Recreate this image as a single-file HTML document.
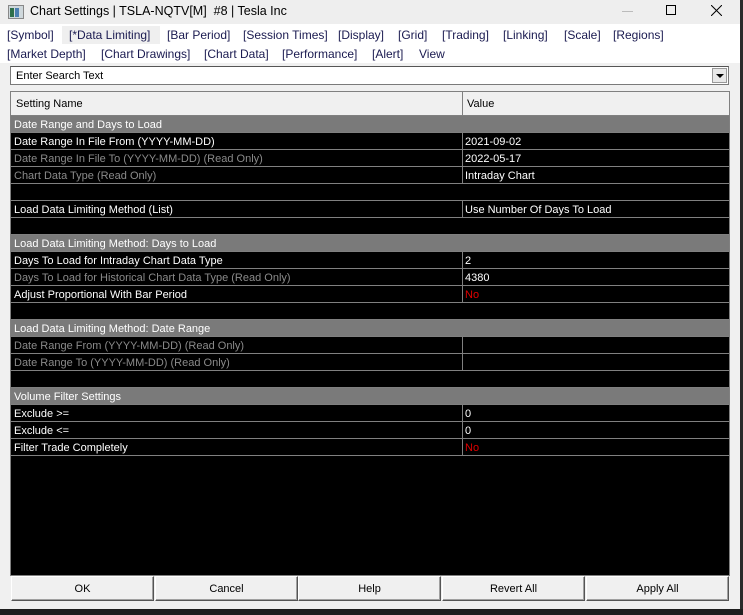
<!DOCTYPE html>
<html><head><style>
*{margin:0;padding:0;box-sizing:border-box}
body{width:743px;height:615px;background:#f0f0f0;font-family:"Liberation Sans",sans-serif;font-size:11px;position:relative;overflow:hidden}
.tb{position:absolute;left:0;top:0;width:741px;height:24px;background:#eeeeee;font-size:12.5px;color:#000}
.menu{position:absolute;left:0;top:24px;width:741px;height:39px;background:#fff;font-size:12px;color:#1a1a50}
.menu div{position:absolute;white-space:nowrap}
.search{position:absolute;left:10px;top:66px;width:719px;height:19px;background:#fff;border:1px solid #7a7a7a;border-top-color:#555;padding:3px 5px 0;font-size:11px}
.dd{position:absolute;right:1px;top:1px;width:15px;height:15px;background:#e8e8e8;border:1px solid #999}
.dd:after{content:"";position:absolute;left:3px;top:5px;border-left:4px solid transparent;border-right:4px solid transparent;border-top:4px solid #000}
.tbl{position:absolute;left:10px;top:91px;width:720px;height:485px;background:#000;border:1px solid #808080}
.hdr{position:absolute;left:0;top:0;width:718px;height:24px;background:#f0f0f0;border-bottom:1px solid #808080}
.hdr span{position:absolute;top:6px}
.r{position:absolute;left:0;width:718px;height:17px;border-bottom:1px solid #808080;color:#fff;white-space:nowrap}
.r span{position:absolute;top:3px}
.r .v{left:451px;border-left:1px solid #808080;height:16px;top:0;padding:3px 0 0 2px}
.s{background:#7a7a7a}
.g{color:#8a8a8a}
.red{color:#e00000}
.btns{position:absolute;left:10px;top:576px;width:720px;height:25px}
.b{position:absolute;top:0;height:25px;width:143px;background:#f0f0f0;border:1px solid #fff;border-right-color:#555;border-bottom-color:#555;box-shadow:inset -1px -1px 0 #a0a0a0;text-align:center;line-height:24px;font-size:11px}
</style></head><body>
<div class="tb">
<svg style="position:absolute;left:8px;top:5px" width="16" height="14"><rect x="0.5" y="0.5" width="15" height="13" fill="#cfd8dc" stroke="#888"/><rect x="2" y="3" width="4" height="9" fill="#2e6f4a"/><rect x="7" y="3" width="4" height="9" fill="#4a7fb0"/></svg>
<div style="position:absolute;left:30px;top:4px">Chart Settings | TSLA-NQTV[M]&nbsp; #8 | Tesla Inc</div>
<div style="position:absolute;left:622px;top:11px;width:11px;height:1px;background:#bbb"></div>
<div style="position:absolute;left:666px;top:5px;width:10px;height:10px;border:1px solid #000"></div>
<svg style="position:absolute;left:711px;top:5px" width="11" height="11"><path d="M0 0L11 11M11 0L0 11" stroke="#000" stroke-width="1"/></svg>
</div>
<div class="menu">
<div style="left:62px;top:2px;width:98px;height:18px;background:#efefef"></div>
<div style="left:7px;top:4px">[Symbol]</div><div style="left:69px;top:4px">[*Data Limiting]</div><div style="left:167px;top:4px">[Bar Period]</div><div style="left:243px;top:4px">[Session Times]</div><div style="left:338px;top:4px">[Display]</div><div style="left:398px;top:4px">[Grid]</div><div style="left:442px;top:4px">[Trading]</div><div style="left:503px;top:4px">[Linking]</div><div style="left:564px;top:4px">[Scale]</div><div style="left:613px;top:4px">[Regions]</div>
<div style="left:7px;top:23px">[Market Depth]</div><div style="left:101px;top:23px">[Chart Drawings]</div><div style="left:204px;top:23px">[Chart Data]</div><div style="left:282px;top:23px">[Performance]</div><div style="left:372px;top:23px">[Alert]</div><div style="left:419px;top:23px">View</div>
</div>
<div class="search">Enter Search Text<div class="dd"></div></div>
<div class="tbl">
<div class="hdr"><span style="left:5px">Setting Name</span><span style="left:451px;top:0;height:24px;border-left:1px solid #808080;padding:6px 0 0 4px">Value</span></div>
<div class="r s" style="top:24px"><span style="left:3px">Date Range and Days to Load</span></div>
<div class="r" style="top:41px"><span style="left:3px">Date Range In File From (YYYY-MM-DD)</span><span class="v">2021-09-02</span></div>
<div class="r" style="top:58px"><span class="g" style="left:3px">Date Range In File To (YYYY-MM-DD) (Read Only)</span><span class="v">2022-05-17</span></div>
<div class="r" style="top:75px"><span class="g" style="left:3px">Chart Data Type (Read Only)</span><span class="v">Intraday Chart</span></div>
<div class="r" style="top:92px"></div>
<div class="r" style="top:109px"><span style="left:3px">Load Data Limiting Method (List)</span><span class="v">Use Number Of Days To Load</span></div>
<div class="r" style="top:126px"></div>
<div class="r s" style="top:143px"><span style="left:3px">Load Data Limiting Method: Days to Load</span></div>
<div class="r" style="top:160px"><span style="left:3px">Days To Load for Intraday Chart Data Type</span><span class="v">2</span></div>
<div class="r" style="top:177px"><span class="g" style="left:3px">Days To Load for Historical Chart Data Type (Read Only)</span><span class="v">4380</span></div>
<div class="r" style="top:194px"><span style="left:3px">Adjust Proportional With Bar Period</span><span class="v red">No</span></div>
<div class="r" style="top:211px"></div>
<div class="r s" style="top:228px"><span style="left:3px">Load Data Limiting Method: Date Range</span></div>
<div class="r" style="top:245px"><span class="g" style="left:3px">Date Range From (YYYY-MM-DD) (Read Only)</span><span class="v"></span></div>
<div class="r" style="top:262px"><span class="g" style="left:3px">Date Range To (YYYY-MM-DD) (Read Only)</span><span class="v"></span></div>
<div class="r" style="top:279px"></div>
<div class="r s" style="top:296px"><span style="left:3px">Volume Filter Settings</span></div>
<div class="r" style="top:313px"><span style="left:3px">Exclude &gt;=</span><span class="v">0</span></div>
<div class="r" style="top:330px"><span style="left:3px">Exclude &lt;=</span><span class="v">0</span></div>
<div class="r" style="top:347px"><span style="left:3px">Filter Trade Completely</span><span class="v red">No</span></div>
</div>
<div class="btns">
<div class="b" style="left:1px">OK</div><div class="b" style="left:145px">Cancel</div><div class="b" style="left:288px">Help</div><div class="b" style="left:432px">Revert All</div><div class="b" style="left:576px">Apply All</div>
</div>
<div style="position:absolute;left:740px;top:0;width:3px;height:615px;background:#2a2a2a"></div>
<div style="position:absolute;left:0;top:609px;width:743px;height:6px;background:#1e1e1e"></div>
</body></html>
